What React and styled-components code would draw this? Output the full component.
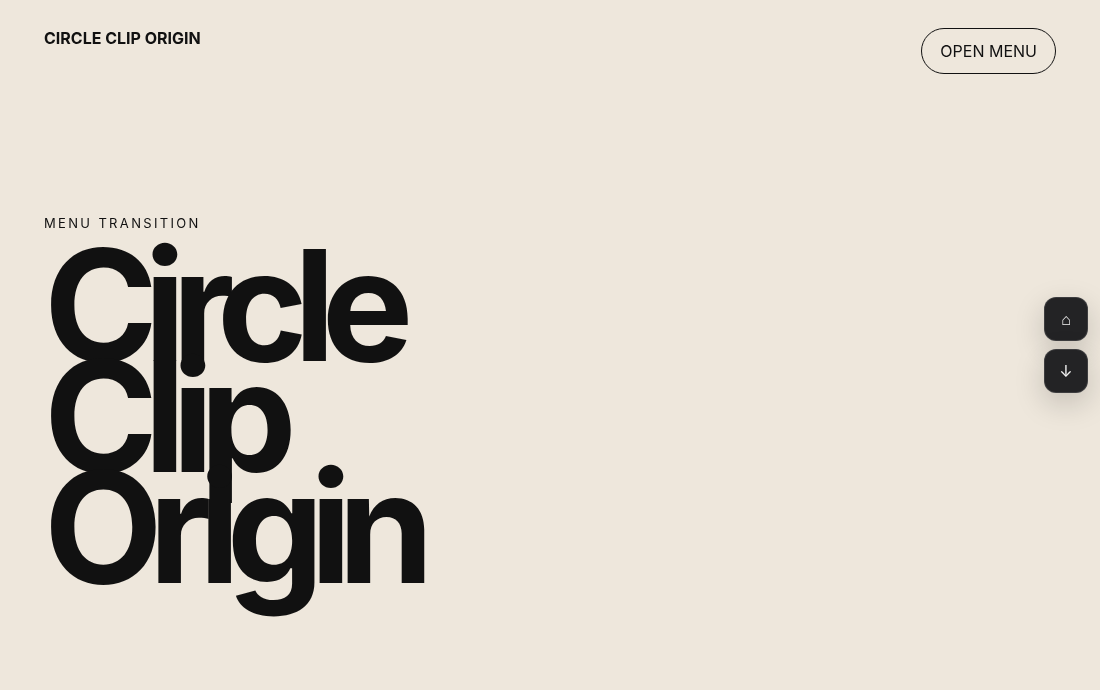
import React from 'react'
import styled, { createGlobalStyle } from 'styled-components'

const Global = createGlobalStyle`
  html, body {
    margin: 0;
    height: 100%;
    background: #eee7dc;
    overflow: hidden;
  }
  body {
    font-family: Inter, "Liberation Sans", sans-serif;
    color: #111111;
  }
`

const Page = styled.div`
  position: relative;
  width: 100%;
  height: 690px;
  padding: 28px 44px 0;
  box-sizing: border-box;
  display: flex;
  flex-direction: column;
  will-change: transform;
`

const Header = styled.header`
  display: flex;
  justify-content: space-between;
  align-items: flex-start;
`

const Brand = styled.div`
  font-size: 16px;
  font-weight: 700;
  line-height: 20px;
`

const MenuButton = styled.button`
  height: 46px;
  padding: 0 18px;
  border: 1px solid #111111;
  border-radius: 999px;
  background: transparent;
  color: #111111;
  font: 400 16px Inter, sans-serif;
`

const Hero = styled.section`
  margin-top: 141px;
`

const Kicker = styled.p`
  margin: 0;
  font-size: 13px;
  line-height: 16px;
  letter-spacing: 0.18em;
`

const Title = styled.h1`
  margin: 19px 0 0;
  font-size: 154px;
  font-weight: 700;
  line-height: 111px;
  letter-spacing: -0.09em;
`

const TitleLine = styled.span`
  display: block;
`

const Rail = styled.div`
  position: absolute;
  top: 297px;
  right: 12px;
  display: flex;
  flex-direction: column;
  gap: 8px;
`

const RailButton = styled.button`
  width: 44px;
  height: 44px;
  padding: 0;
  display: flex;
  align-items: center;
  justify-content: center;
  border: 1px solid rgba(255, 255, 255, 0.12);
  border-radius: 12px;
  background: #232325;
  color: #f0f0f0;
  font: 400 16px Inter, "Liberation Sans", sans-serif;
  box-shadow: 0 10px 30px rgba(0, 0, 0, 0.18);
`

export default function App() {
  return (
    <Page>
      <Global />
      <Header>
        <Brand>CIRCLE CLIP ORIGIN</Brand>
        <MenuButton>OPEN MENU</MenuButton>
      </Header>
      <Hero>
        <Kicker>MENU TRANSITION</Kicker>
        <Title>
          <TitleLine>Circle</TitleLine>
          <TitleLine>Clip</TitleLine>
          <TitleLine>Origin</TitleLine>
        </Title>
      </Hero>
      <Rail>
        <RailButton>⌂</RailButton>
        <RailButton>↓</RailButton>
      </Rail>
    </Page>
  )
}
